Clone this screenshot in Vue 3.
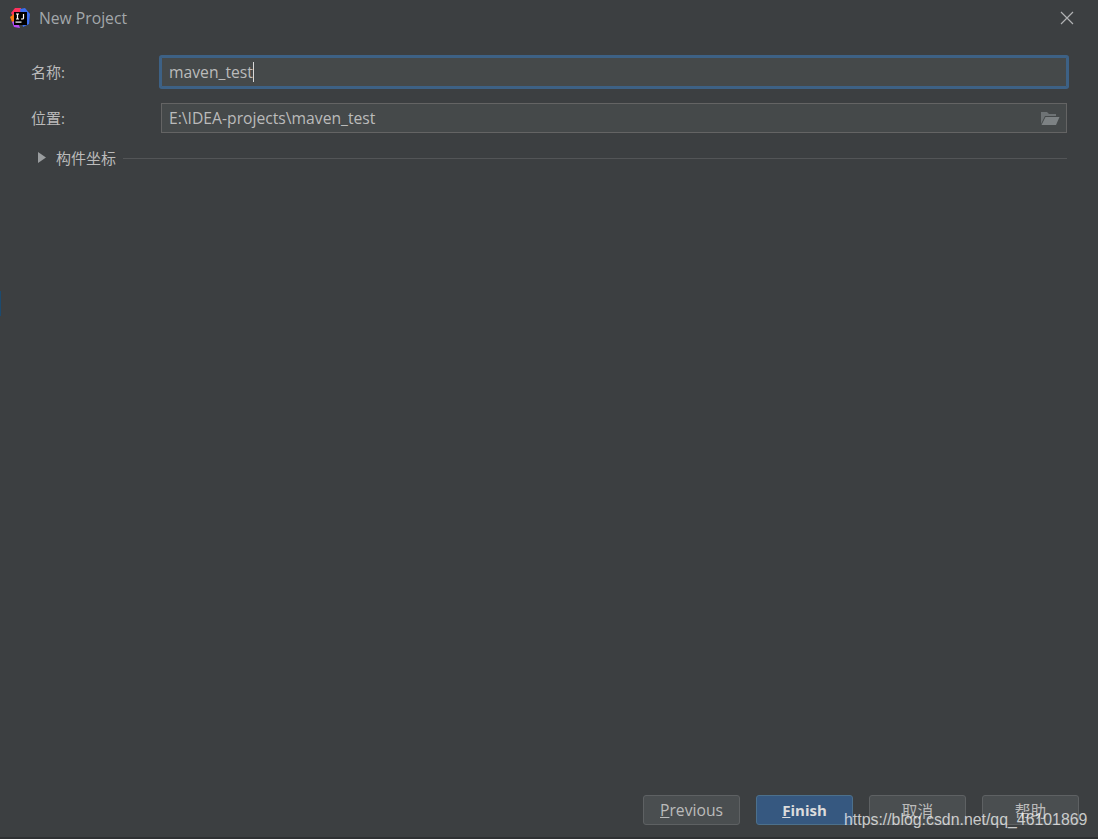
<template>
  <div class="dialog">
    <header class="titlebar">
      <svg class="logo" width="20" height="20" viewBox="0 0 20 20" aria-hidden="true">
        <path d="M1 5 L5 0 L11 0 L11 8 L4 10 Z" fill="#fe315d" />
        <path d="M0 9 L4 6 L6 13 L2 14 Z" fill="#f97a12" />
        <path d="M10 1 L15 0 L20 6 L19 16 L13 19 L11 10 Z" fill="#3b6ef0" />
        <path d="M2 14 L7 12 L10 20 L4 19 Z" fill="#b74af7" />
        <rect x="4" y="4" width="13" height="13" fill="#000" />
        <rect x="5.5" y="13.5" width="6" height="1.2" fill="#fff" />
        <path d="M6 6 H9 M7.5 6 V11 M6 11 H9 M13.5 6 V10 Q13.5 11 12.5 11 H11" fill="none" stroke="#fff" stroke-width="1.2" />
      </svg>
      <span class="title">New Project</span>
      <svg class="close" width="14" height="14" viewBox="0 0 14 14" aria-hidden="true">
        <path d="M1 1 L13 13 M13 1 L1 13" stroke="#b0b2b3" stroke-width="1.2" fill="none" />
      </svg>
    </header>

    <main class="form">
      <div class="row">
        <label class="label">名称:</label>
        <div class="field focused">
          <span class="value">{{ name }}</span><span class="caret"></span>
        </div>
      </div>
      <div class="row">
        <label class="label">位置:</label>
        <div class="field">
          <span class="value">{{ location }}</span>
          <svg class="folder" width="20" height="14" viewBox="0 0 20 14" aria-hidden="true">
            <path d="M1 1 H7 L9 3 H16 V5 H5 L1 13 Z" fill="#6e7375" />
            <path d="M5.5 6 H19.5 L16 14 H1.5 Z" fill="#7d8284" />
          </svg>
        </div>
      </div>
      <div class="section">
        <svg class="arrow" width="8" height="11" viewBox="0 0 8 11" aria-hidden="true">
          <path d="M0 0 L8 5.5 L0 11 Z" fill="#9a9d9f" />
        </svg>
        <span class="section-title">构件坐标</span>
        <span class="rule"></span>
      </div>
    </main>

    <footer class="buttons">
      <button type="button" class="btn"><u>P</u>revious</button>
      <button type="button" class="btn primary"><u>F</u>inish</button>
      <button type="button" class="btn">取消</button>
      <button type="button" class="btn">帮助</button>
    </footer>

    <span class="watermark">https://blog.csdn.net/qq_46101869</span>
    <span class="edge"></span>
  </div>
</template>

<script setup>
const name = 'maven_test'
const location = 'E:\\IDEA-projects\\maven_test'
</script>

<style>
html,
body {
  margin: 0;
  background: #3c3f41;
}
</style>

<style scoped>
.dialog {
  position: relative;
  box-sizing: border-box;
  width: 1098px;
  height: 839px;
  display: flex;
  flex-direction: column;
  background: #3c3f41;
  border-bottom: 2px solid #2f3133;
  color: #bbbbbb;
  font-family: "Open Sans", "Noto Sans CJK SC", sans-serif;
  font-size: 15.7px;
  overflow: hidden;
}

.titlebar {
  display: flex;
  align-items: center;
  height: 36px;
  padding: 0 24px 0 10px;
}

.logo {
  margin-right: 9px;
}

.title {
  color: #a3a8ab;
}

.close {
  margin-left: auto;
}

.form {
  flex: 1;
  display: flex;
  flex-direction: column;
  padding: 21px 31px 0 31px;
}

.row {
  display: flex;
  align-items: center;
  height: 30px;
  margin-bottom: 16px;
}

.label {
  width: 130px;
  flex: none;
  font-size: 15px;
  padding-bottom: 2px;
}

.field {
  flex: 1;
  box-sizing: border-box;
  height: 30px;
  display: flex;
  align-items: center;
  padding-left: 7px;
  padding-bottom: 1px;
  background: #45494a;
  border: 1px solid #646464;
}

.field.focused {
  border-color: #3d6185;
  box-shadow: 0 0 0 2px #3d6185;
  border-radius: 1px;
}

.caret {
  width: 1px;
  height: 20px;
  background: #d8d8d8;
}

.folder {
  margin-left: auto;
  margin-right: 6px;
}

.section {
  display: flex;
  align-items: center;
  height: 20px;
  margin-top: -2px;
  padding-left: 7px;
}

.arrow {
  margin-right: 10px;
}

.section-title {
  margin-right: 7px;
  font-size: 15px;
}

.rule {
  flex: 1;
  height: 1px;
  margin-top: 3px;
  background: #535557;
}

.buttons {
  display: flex;
  justify-content: flex-end;
  gap: 16px;
  padding: 0 19px 12px 0;
}

.btn {
  box-sizing: border-box;
  width: 97px;
  height: 30px;
  padding: 0;
  background: #4a4e50;
  border: 1px solid #5e6163;
  border-radius: 3px;
  color: #bbbbbb;
  font: inherit;
}

.btn.primary {
  background: #365880;
  border-color: #4c708c;
  color: #dcdcdc;
  font-size: 15px;
  font-weight: 700;
}

.watermark {
  position: absolute;
  left: 844px;
  top: 811px;
  color: rgba(255, 255, 255, 0.72);
  font-family: "Liberation Sans", sans-serif;
  font-size: 15.87px;
  white-space: nowrap;
}

.edge {
  position: absolute;
  left: 0;
  top: 291px;
  width: 1px;
  height: 25px;
  background: #1c4a6e;
}
</style>
